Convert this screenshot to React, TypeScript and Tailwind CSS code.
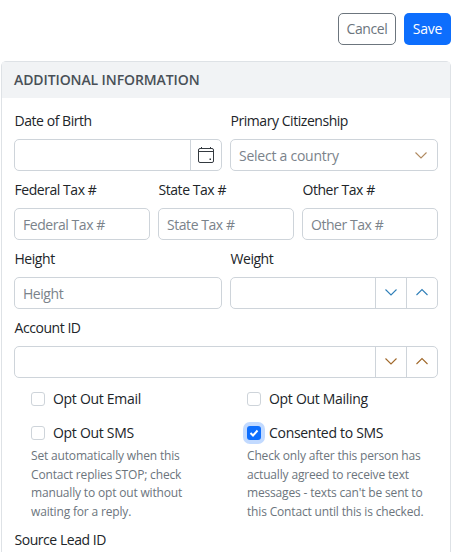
import React from "react";

const Chev = ({ up = false, color }: { up?: boolean; color: string }) => (
  <svg width="16" height="16" viewBox="0 0 16 16" fill="none" stroke={color} strokeWidth="1.1">
    <path d={up ? "M2.5 11 8 5.5 13.5 11" : "M2.5 5.5 8 11 13.5 5.5"} />
  </svg>
);

const Label = ({ children }: { children: React.ReactNode }) => (
  <div className="h-[21px] mb-2 pl-[0.5px] text-[14px] leading-[21px] tracking-[-0.45px] text-[#212529]">{children}</div>
);

const TextBox = ({ ph }: { ph: string }) => (
  <div className="h-8 border border-[#ced4da] rounded-[5px] pl-[8px] pr-2 text-[14px] leading-[31px] tracking-[-0.45px] text-[#7b838b] bg-white">{ph}</div>
);

const Spin = ({ color }: { color: string }) => (
  <div className="h-8 flex border border-[#ced4da] rounded-[5px] bg-white">
    <div className="flex-1" />
    <div className="w-[31px] border-l border-[#ced4da] flex items-center justify-center pb-[2px]"><Chev color={color} /></div>
    <div className="w-[31px] border-l border-[#ced4da] flex items-center justify-center pb-[2px]"><Chev up color={color} /></div>
  </div>
);

const Check = ({ label, checked = false }: { label: string; checked?: boolean }) => (
  <div className="flex items-center h-[21px]">
    {checked ? (
      <span className="w-[14px] h-[14px] rounded-[3px] bg-[#0d6efd] flex items-center justify-center shadow-[0_0_0_4px_#c2daff]">
        <svg width="10" height="10" viewBox="0 0 10 10" fill="none" stroke="white" strokeWidth="2"><path d="M1.5 5 4 7.5 8.5 2.5" /></svg>
      </span>
    ) : (
      <span className="w-[14px] h-[14px] rounded-[3px] border border-[#ced4da] bg-white" />
    )}
    <span className="ml-[8px] text-[14px] leading-[21px] tracking-[-0.3px] text-[#212529]">{label}</span>
  </div>
);

export default function App() {
  return (
    <div className="w-[457px] h-[552px] overflow-hidden bg-white font-['Open_Sans','Noto_Sans',sans-serif]">
      <div className="flex justify-end gap-2 pt-[13px] pr-[6px] mb-4">
        <div className="w-[58px] h-8 border border-[#6c757d] rounded-[5px] text-[14px] leading-[30px] tracking-[-0.4px] text-center text-[#6c757d]">Cancel</div>
        <div className="w-[47px] h-8 rounded-[5px] bg-[#0d6efd] text-[14px] leading-8 tracking-[-0.2px] text-center text-white">Save</div>
      </div>
      <div className="ml-[1px] mr-[6px] border border-[#dee2e6] rounded-t-[5px] h-[600px]">
        <div className="h-9 bg-[#f1f3f5] px-[12px] text-[14px] leading-9 font-semibold tracking-[-0.1px] text-[#495057]">ADDITIONAL INFORMATION</div>
        <div className="pt-3 pl-[12px] pr-3">
          <div className="grid grid-cols-2 gap-2 mb-2">
            <div>
              <Label>Date of Birth</Label>
              <div className="h-8 flex border border-[#ced4da] rounded-[5px] bg-white">
                <div className="flex-1" />
                <div className="w-[31px] border-l border-[#ced4da] flex items-center justify-center">
                  <svg width="16" height="16" viewBox="0 0 16 16" fill="none" stroke="#343a40" strokeWidth="1">
                    <rect x="0.5" y="1.5" width="15" height="14" rx="1.5" />
                    <path d="M0.5 4.5h15M3.5 0v2M12.5 0v2" />
                    <rect x="11.5" y="11.5" width="1.5" height="1.5" fill="#343a40" stroke="none" />
                  </svg>
                </div>
              </div>
            </div>
            <div>
              <Label>Primary Citizenship</Label>
              <div className="h-8 flex items-center justify-between border border-[#ced4da] rounded-[5px] pl-[8px] pr-[8px] text-[14px] tracking-[-0.25px] text-[#7b838b]">
                <span>Select a country</span>
                <Chev color="#b08a60" />
              </div>
            </div>
          </div>
          <div className="grid grid-cols-3 gap-2 mb-2">
            <div><Label>Federal Tax #</Label><TextBox ph="Federal Tax #" /></div>
            <div><Label>State Tax #</Label><TextBox ph="State Tax #" /></div>
            <div><Label>Other Tax #</Label><TextBox ph="Other Tax #" /></div>
          </div>
          <div className="grid grid-cols-2 gap-2 mb-2">
            <div><Label>Height</Label><TextBox ph="Height" /></div>
            <div><Label>Weight</Label><Spin color="#2f7fb8" /></div>
          </div>
          <div className="mb-[10px]">
            <Label>Account ID</Label>
            <Spin color="#a0682a" />
          </div>
          <div className="grid grid-cols-2 gap-x-2">
            <div className="pl-[17px] mb-[13px]"><Check label="Opt Out Email" /></div>
            <div className="pl-[17px] mb-[13px]"><Check label="Opt Out Mailing" /></div>
            <div className="pl-[17px] pr-[14px]">
              <Check label="Opt Out SMS" />
              <p className="mt-1 text-[12px] leading-[18.6px] tracking-[-0.17px] text-[#6c757d]">Set automatically when this Contact replies STOP; check manually to opt out without waiting for a reply.</p>
            </div>
            <div className="pl-[17px]">
              <Check checked label="Consented to SMS" />
              <p className="mt-1 text-[12px] leading-[18.6px] tracking-[-0.17px] text-[#6c757d]">Check only after this person has actually agreed to receive text messages - texts can't be sent to this Contact until this is checked.</p>
            </div>
          </div>
          <div className="mt-2"><Label>Source Lead ID</Label></div>
        </div>
      </div>
    </div>
  );
}
